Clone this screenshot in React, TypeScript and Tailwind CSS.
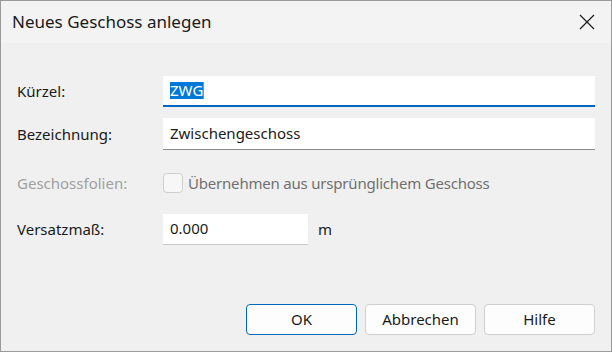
import React from 'react';

const font = { fontFamily: '"Noto Sans", "Liberation Sans", sans-serif' };

function Label({ children, disabled = false }: { children: React.ReactNode; disabled?: boolean }) {
  return (
    <div className={`w-[146px] shrink-0 text-[15px] ${disabled ? 'text-[#a0a0a0]' : 'text-[#1a1a1a]'}`}>
      {children}
    </div>
  );
}

function DialogButton({ children, primary = false }: { children: React.ReactNode; primary?: boolean }) {
  return (
    <button
      className={`h-[31px] w-[111px] rounded-[4px] bg-[#fdfdfd] text-[15px] text-[#1a1a1a] ${
        primary ? 'border border-[#0067c0]' : 'border border-[#d0d0d0]'
      }`}
    >
      {children}
    </button>
  );
}

export default function App() {
  return (
    <div className="h-[352px] w-[612px] border border-[#9a9a9a] bg-[#f0f0f0]" style={font}>
      {/* title bar */}
      <div className="flex h-[42px] items-center justify-between bg-[#f3f3f3] pl-[11px] pr-[16px]">
        <span className="text-[17px] text-[#1a1a1a]">Neues Geschoss anlegen</span>
        <svg width="16" height="16" viewBox="0 0 16 16" className="text-[#1a1a1a]">
          <path d="M1 1 L15 15 M15 1 L1 15" stroke="currentColor" strokeWidth="1.2" fill="none" />
        </svg>
      </div>

      <div className="flex flex-col pl-[16px] pr-[16px] pt-[33px]">
        {/* Kürzel */}
        <div className="flex items-center">
          <Label>Kürzel:</Label>
          <div className="flex h-[31px] flex-1 items-center border-b-2 border-[#0067c0] bg-white pl-[7px]">
            <span className="bg-[#0078d7] text-[15px] leading-[17px] text-white">ZWG</span>
            <span className="h-[17px] w-px bg-[#e87a1e]" />
          </div>
        </div>

        {/* Bezeichnung */}
        <div className="mt-[11px] flex items-center">
          <Label>Bezeichnung:</Label>
          <div className="flex h-[32px] flex-1 items-center border-b border-[#8a8a8a] bg-white pl-[7px] text-[15px] text-[#1a1a1a]">
            Zwischengeschoss
          </div>
        </div>

        {/* Geschossfolien */}
        <div className="mt-[22px] flex items-center">
          <Label disabled>Geschossfolien:</Label>
          <div className="flex items-center gap-[5px]">
            <span className="h-[20px] w-[20px] rounded-[4px] border border-[#cfcfcf] bg-[#f7f7f7]" />
            <span className="text-[15px] tracking-[-0.2px] text-[#707070]">Übernehmen aus ursprünglichem Geschoss</span>
          </div>
        </div>

        {/* Versatzmaß */}
        <div className="mt-[19px] flex items-center">
          <Label>Versatzmaß:</Label>
          <div className="flex h-[31px] w-[145px] items-center border-b border-[#c8c8c8] bg-white pl-[7px] text-[15px] text-[#1a1a1a]">
            0.000
          </div>
          <span className="ml-[10px] text-[15px] text-[#1a1a1a]">m</span>
        </div>

        {/* buttons */}
        <div className="mt-[59px] flex justify-end gap-[8px]">
          <DialogButton primary>OK</DialogButton>
          <DialogButton>Abbrechen</DialogButton>
          <DialogButton>Hilfe</DialogButton>
        </div>
      </div>
    </div>
  );
}
